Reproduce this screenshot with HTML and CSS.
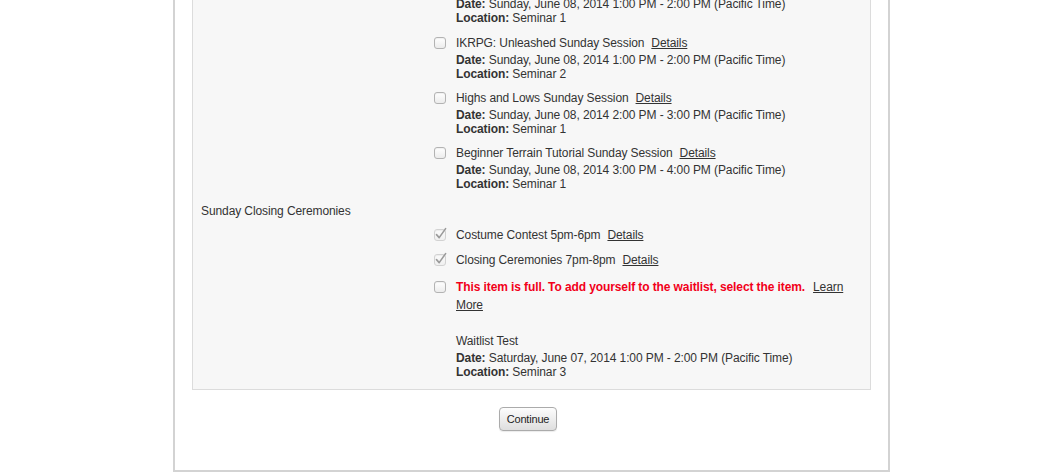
FILE: index.html
```html
<!DOCTYPE html>
<html lang="en">
<head>
<meta charset="utf-8">
<title>Session selection</title>
<link rel="stylesheet" href="styles.css">
</head>
<body>
<div class="page">
  <div class="panel">
    <div class="group">
      <div class="item tail">
        <div class="item-body">
          <div class="meta"><b>Date:</b> Sunday, June 08, 2014 1:00 PM - 2:00 PM (Pacific Time)</div>
          <div class="meta"><b>Location:</b> Seminar 1</div>
        </div>
      </div>
      <div class="item">
        <span class="box"></span>
        <div class="item-body">
          <div class="title">IKRPG: Unleashed Sunday Session<a href="#" class="details">Details</a></div>
          <div class="meta"><b>Date:</b> Sunday, June 08, 2014 1:00 PM - 2:00 PM (Pacific Time)</div>
          <div class="meta"><b>Location:</b> Seminar 2</div>
        </div>
      </div>
      <div class="item">
        <span class="box"></span>
        <div class="item-body">
          <div class="title">Highs and Lows Sunday Session<a href="#" class="details">Details</a></div>
          <div class="meta"><b>Date:</b> Sunday, June 08, 2014 2:00 PM - 3:00 PM (Pacific Time)</div>
          <div class="meta"><b>Location:</b> Seminar 1</div>
        </div>
      </div>
      <div class="item">
        <span class="box"></span>
        <div class="item-body">
          <div class="title">Beginner Terrain Tutorial Sunday Session<a href="#" class="details">Details</a></div>
          <div class="meta"><b>Date:</b> Sunday, June 08, 2014 3:00 PM - 4:00 PM (Pacific Time)</div>
          <div class="meta"><b>Location:</b> Seminar 1</div>
        </div>
      </div>
    </div>

    <div class="group-label">Sunday Closing Ceremonies</div>
    <div class="group">
      <div class="item simple">
        <span class="box checked"><svg width="14" height="16" viewBox="0 0 14 16"><path d="M2.5 8.6 L5.2 11.6 L11.6 2.6" fill="none" stroke="#9a9a9a" stroke-width="1.6" stroke-linecap="round" stroke-linejoin="round"/></svg></span>
        <div class="item-body">
          <div class="title">Costume Contest 5pm-6pm<a href="#" class="details">Details</a></div>
        </div>
      </div>
      <div class="item simple">
        <span class="box checked"><svg width="14" height="16" viewBox="0 0 14 16"><path d="M2.5 8.6 L5.2 11.6 L11.6 2.6" fill="none" stroke="#9a9a9a" stroke-width="1.6" stroke-linecap="round" stroke-linejoin="round"/></svg></span>
        <div class="item-body">
          <div class="title">Closing Ceremonies 7pm-8pm<a href="#" class="details">Details</a></div>
        </div>
      </div>
      <div class="item last">
        <span class="box"></span>
        <div class="item-body">
          <div class="msg"><span class="full">This item is full. To add yourself to the waitlist, select the item.</span><a href="#" class="details wide">Learn More</a></div>
          <div class="spacer"></div>
          <div class="title">Waitlist Test</div>
          <div class="meta"><b>Date:</b> Saturday, June 07, 2014 1:00 PM - 2:00 PM (Pacific Time)</div>
          <div class="meta"><b>Location:</b> Seminar 3</div>
        </div>
      </div>
    </div>
  </div>
  <div class="actions">
    <button type="button" class="btn">Continue</button>
  </div>
</div>
</body>
</html>
```

FILE: styles.css
```css
html, body {
  margin: 0;
  padding: 0;
  background: #ffffff;
}

body {
  font-family: "Liberation Sans", Arial, Helvetica, sans-serif;
  font-size: 12px;
  letter-spacing: -0.1px;
  color: #333333;
}

.page {
  width: 713px;
  margin-left: 173px;
  margin-top: -30px;
  border: 2px solid #d3d3d3;
  border-top: none;
  background: #ffffff;
}

.panel {
  margin: 0 17px;
  padding: 27px 10px 10px 8px;
  background: #f7f7f7;
  border: 1px solid #dcdcdc;
  border-top: none;
}

.group {
  padding-left: 233px;
}

.item {
  display: flex;
  align-items: flex-start;
  margin-bottom: 8px;
}

.item.simple {
  margin-bottom: 7px;
}

.item.last {
  margin-bottom: 0;
  margin-top: 9px;
}

.item.tail {
  padding-left: 22px;
  margin-bottom: 9px;
}

.box {
  flex: none;
  width: 10px;
  height: 10px;
  margin-top: 3px;
  margin-right: 10px;
  border: 1px solid #b3b3b3;
  border-radius: 3px;
  background: linear-gradient(#ffffff, #ececec);
  box-shadow: inset 0 1px 1px rgba(0,0,0,0.06);
  position: relative;
}

.box.checked {
  border-color: #d2d2d2;
  background: linear-gradient(#fbfbfb, #f0f0f0);
}

.box.checked svg {
  position: absolute;
  left: -1px;
  top: -4px;
}

.item-body {
  flex: 1;
  min-width: 0;
}

.title {
  line-height: 19px;
}

.simple .title {
  line-height: 18px;
}

.msg {
  line-height: 18px;
}

.meta {
  line-height: 14px;
}

.meta b {
  font-weight: bold;
}

.details {
  color: #333333;
  text-decoration: underline;
  margin-left: 7px;
}

.details.wide {
  margin-left: 8px;
}

.full {
  color: #f2001a;
  font-weight: bold;
}

.spacer {
  height: 18px;
}

.group-label {
  line-height: 14px;
  padding-top: 5px;
  margin-bottom: 8px;
}

.actions {
  padding: 17px 0 39px;
  text-align: center;
}

.btn {
  width: 58px;
  height: 24px;
  margin-right: 7px;
  padding: 0;
  font-family: "Liberation Sans", Arial, Helvetica, sans-serif;
  font-size: 11px;
  letter-spacing: -0.2px;
  color: #222222;
  border: 1px solid #ababab;
  border-radius: 4px;
  background: linear-gradient(#fdfdfd, #dedede);
  box-shadow: 0 1px 1px rgba(0,0,0,0.08);
}
```
